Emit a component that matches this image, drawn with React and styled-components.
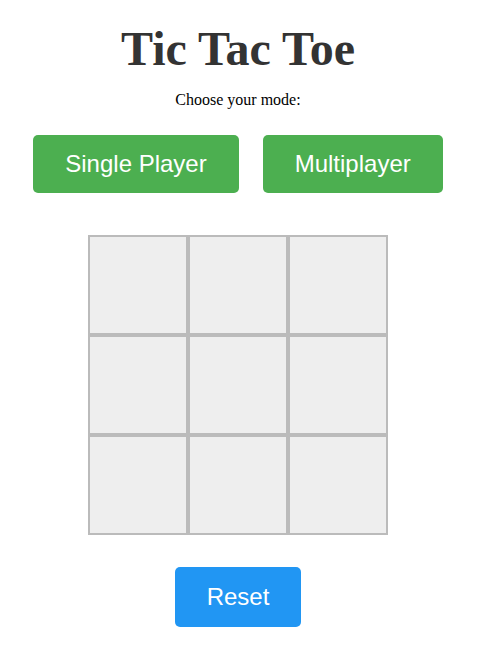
import React, { useState } from "react";
import styled, { createGlobalStyle } from "styled-components";

const GlobalStyle = createGlobalStyle`
  body {
    margin: 0;
    background: #fff;
    font-family: "Liberation Serif", "Times New Roman", serif;
  }
`;

const Page = styled.div`
  width: 476px;
  display: flex;
  flex-direction: column;
  align-items: center;
`;

const Title = styled.h1`
  margin: 21px 0 0;
  font-size: 48px;
  font-weight: 700;
  color: #333;
  font-family: "Liberation Serif", "Times New Roman", serif;
`;

const Subtitle = styled.p`
  margin: 15px 0 0;
  font-size: 16px;
  color: #000;
`;

const ModeRow = styled.div`
  display: flex;
  gap: 24px;
  margin-top: 26px;
`;

const Button = styled.button`
  padding: ${({ $tall }) => ($tall ? "16px 32px" : "15px 32px")};
  font-family: "Liberation Sans", Arial, sans-serif;
  font-size: 24px;
  color: #fff;
  background-color: ${({ $color }) => $color};
  border: none;
  border-radius: 5px;
  cursor: pointer;
`;

const Board = styled.div`
  display: grid;
  grid-template-columns: repeat(3, 100px);
  grid-template-rows: repeat(3, 100px);
  margin-top: 42px;
`;

const Cell = styled.div`
  box-sizing: border-box;
  border: 2px solid #bbb;
  background: #eee;
  display: flex;
  align-items: center;
  justify-content: center;
  font-family: "Liberation Sans", Arial, sans-serif;
  font-size: 48px;
  color: #333;
  cursor: pointer;
`;

const ResetRow = styled.div`
  margin-top: 32px;
`;

export default function App() {
  const [cells, setCells] = useState(Array(9).fill(""));
  const [turn, setTurn] = useState("X");

  const play = (i) => {
    if (cells[i]) return;
    const next = [...cells];
    next[i] = turn;
    setCells(next);
    setTurn(turn === "X" ? "O" : "X");
  };

  const reset = () => {
    setCells(Array(9).fill(""));
    setTurn("X");
  };

  return (
    <>
      <GlobalStyle />
      <Page>
        <Title>Tic Tac Toe</Title>
        <Subtitle>Choose your mode:</Subtitle>
        <ModeRow>
          <Button $color="#4CAF50">Single Player</Button>
          <Button $color="#4CAF50">Multiplayer</Button>
        </ModeRow>
        <Board>
          {cells.map((c, i) => (
            <Cell key={i} onClick={() => play(i)}>
              {c}
            </Cell>
          ))}
        </Board>
        <ResetRow>
          <Button $color="#2196F3" $tall onClick={reset}>
            Reset
          </Button>
        </ResetRow>
      </Page>
    </>
  );
}
